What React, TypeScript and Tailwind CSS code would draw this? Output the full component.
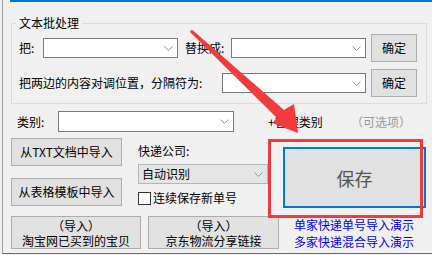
import React from "react";

function Chevron() {
  return (
    <svg width="9" height="5" viewBox="0 0 9 5" className="shrink-0">
      <path d="M0.5 0.5 L4.5 4.5 L8.5 0.5" fill="none" stroke="#8c8c8c" strokeWidth="0.9" />
    </svg>
  );
}

function Combo({ className, children }: { className: string; children?: React.ReactNode }) {
  return (
    <div className={"flex items-center justify-between border border-[#7a7a7a] bg-white pr-[4px] " + className}>
      <span className="pl-[3px]">{children}</span>
      <Chevron />
    </div>
  );
}

function Btn({ className, children }: { className: string; children: React.ReactNode }) {
  return (
    <div className={"flex flex-col items-center justify-center border border-[#adadad] bg-[#e1e1e1] text-center " + className}>
      {children}
    </div>
  );
}

export default function App() {
  return (
    <div className="relative h-[255px] w-[432px] overflow-hidden bg-[#f0f0f0] font-['Noto_Sans_CJK_SC',sans-serif] text-[12px] leading-[16px] text-black">
      <div className="ml-[2px] h-[254px] w-[430px] border-b border-l border-b-[#6d6d6d] border-l-[#a0a0a0]">
        <div className="ml-[7px] h-[2px] bg-[#0078d7]" />

        <fieldset className="ml-[8px] mt-[13px] w-[416px] border border-[#dcdcdc]">
          <legend className="ml-[4px] h-[16px] px-[3px]">文本批处理</legend>
          <div className="pb-[6px] pl-[7px] pt-[3px]">
            <div className="flex h-[28px] items-center">
              <span className="w-[24px]">把:</span>
              <Combo className="h-[20px] w-[135px]" />
              <span className="ml-[7px] w-[46px]">替换成:</span>
              <Combo className="h-[20px] w-[135px]" />
              <Btn className="ml-[5px] h-[28px] w-[46px]">确定</Btn>
            </div>
            <div className="mt-[7px] flex h-[28px] items-center">
              <span className="w-[203px]">把两边的内容对调位置，分隔符为:</span>
              <Combo className="h-[20px] w-[144px]" />
              <Btn className="ml-[5px] h-[28px] w-[46px]">确定</Btn>
            </div>
          </div>
        </fieldset>

        <div className="mt-[7px] flex h-[21px] items-center">
          <span className="ml-[14px] w-[41px]">类别:</span>
          <Combo className="h-[21px] w-[176px]" />
          <span className="ml-[34px] w-[83px]">+管理类别</span>
          <span className="text-[#9a9a9a]">（可选项）</span>
        </div>

        <div className="mt-[6px] flex items-start">
          <div className="ml-[8px] flex w-[111px] flex-col">
            <Btn className="h-[28px] w-[111px]">从TXT文档中导入</Btn>
            <Btn className="mt-[12px] h-[28px] w-[111px]">从表格模板中导入</Btn>
          </div>
          <div className="ml-[16px] flex w-[130px] flex-col">
            <span className="mt-[5px]">快递公司:</span>
            <div className="mt-[5px] flex h-[20px] w-[130px] items-center justify-between border border-[#b5b5b5] bg-[#e5e5e5] pl-[3px] pr-[4px]">
              <span>自动识别</span>
              <Chevron />
            </div>
            <div className="mt-[6px] flex items-center whitespace-nowrap">
              <div className="h-[13px] w-[13px] shrink-0 border border-[#333333] bg-white" />
              <span className="ml-[2px]">连续保存新单号</span>
            </div>
          </div>
          <div className="ml-[15px] mt-[9px] flex h-[61px] w-[143px] items-center justify-center border-2 border-[#0078d7] bg-[#e1e1e1] text-[18px] leading-[20px] text-[#555555]">
            保存
          </div>
        </div>

        <div className="mt-[8px] flex items-start">
          <Btn className="ml-[8px] h-[33px] w-[130px] leading-[15px]">
            <span>
              （导入）
              <br />
              淘宝网已买到的宝贝
            </span>
          </Btn>
          <Btn className="ml-[7px] h-[33px] w-[131px] leading-[15px]">
            <span>
              （导入）
              <br />
              京东物流分享链接
            </span>
          </Btn>
          <div className="ml-[15px] flex flex-col pt-[1px] text-[#0000ff]">
            <span>单家快递单号导入演示</span>
            <span className="mt-[1px]">多家快递混合导入演示</span>
          </div>
        </div>
      </div>

      <div className="pointer-events-none absolute left-[268px] top-[139px] h-[79px] w-[155px] border-[3px] border-[#f33b3b]" />
      <svg className="pointer-events-none absolute left-0 top-0" width="432" height="255" viewBox="0 0 432 255">
        <polygon
          points="191,30 193,30.5 284,110 294,104 298,133 272,123 277,118 190,32"
          fill="#f33b3b"
        />
      </svg>
    </div>
  );
}
